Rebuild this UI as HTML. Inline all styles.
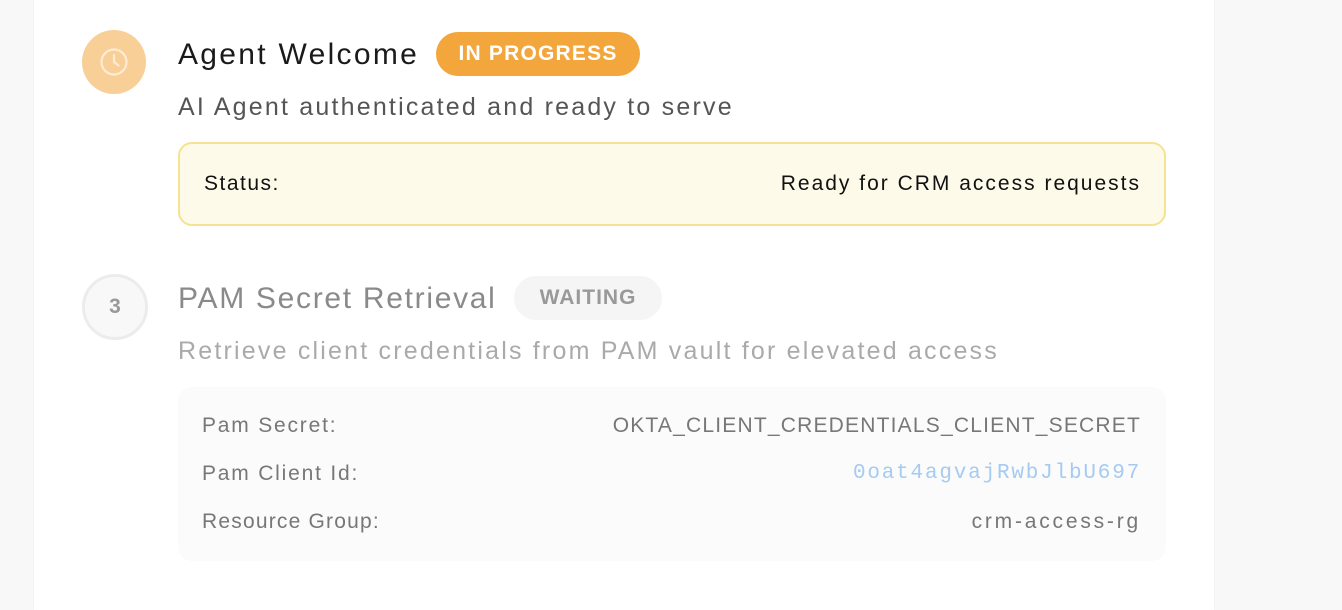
<!DOCTYPE html>
<html><head><style>
body{margin:0;width:1342px;height:592px;background:#f8f8f8;font-family:"Liberation Sans",sans-serif;position:relative;overflow:hidden}
.card{position:absolute;left:34px;top:-10px;width:1180px;height:620px;background:#fff;box-shadow:0 0 2px rgba(0,0,0,.06)}
.a{position:absolute;white-space:nowrap}
</style></head><body>
<div class="card"></div>
<div class="a" style="left:82px;top:30px;width:64px;height:64px;border-radius:50%;background:#f8cf96"></div>
<svg class="a" style="left:94px;top:42px" width="40" height="40" viewBox="0 0 40 40"><circle cx="20" cy="20" r="12.5" fill="none" stroke="#fdebd3" stroke-width="2.2"/><path d="M20 13v7l4.5 3.5" fill="none" stroke="#fdebd3" stroke-width="2.2" stroke-linecap="round"/></svg>
<div class="a" style="left:178px;top:38px;font-size:30px;color:#1a1a1a;letter-spacing:2.3px">Agent Welcome</div>
<div class="a" style="left:436px;top:32px;width:204px;height:44px;border-radius:22px;background:#f2a63c;color:#fff;font-size:21px;font-weight:bold;line-height:44px;text-align:center;letter-spacing:1.2px">IN PROGRESS</div>
<div class="a" style="left:178px;top:93px;font-size:25px;color:#555;letter-spacing:2.2px">AI Agent authenticated and ready to serve</div>
<div class="a" style="left:178px;top:142px;width:984px;height:80px;border:2px solid #f6e291;border-radius:14px;background:#fefaea"></div>
<div class="a" style="left:204px;top:172px;font-size:21px;color:#111;letter-spacing:1.5px">Status:</div>
<div class="a" style="right:201px;top:172px;font-size:21px;color:#111;letter-spacing:2px">Ready for CRM access requests</div>

<div class="a" style="left:82px;top:274px;width:60px;height:60px;border-radius:50%;border:3px solid #ececec;background:#f8f8f8;color:#999;font-size:21px;font-weight:bold;text-align:center;line-height:60px">3</div>
<div class="a" style="left:178px;top:282px;font-size:30px;color:#8a8a8a;letter-spacing:1.7px">PAM Secret Retrieval</div>
<div class="a" style="left:514px;top:276px;width:148px;height:44px;border-radius:22px;background:#f5f5f5;color:#999;font-size:21px;font-weight:bold;line-height:44px;text-align:center;letter-spacing:1px">WAITING</div>
<div class="a" style="left:178px;top:337px;font-size:25px;color:#aaa;letter-spacing:2.2px">Retrieve client credentials from PAM vault for elevated access</div>
<div class="a" style="left:178px;top:387px;width:988px;height:174px;border-radius:14px;background:#fbfbfb"></div>
<div class="a" style="left:202px;top:414px;font-size:21px;color:#777;letter-spacing:1.8px">Pam Secret:</div>
<div class="a" style="right:201px;top:414px;font-size:21px;color:#777;letter-spacing:1.2px">OKTA_CLIENT_CREDENTIALS_CLIENT_SECRET</div>
<div class="a" style="left:202px;top:462px;font-size:21px;color:#777;letter-spacing:1.8px">Pam Client Id:</div>
<div class="a" style="right:201px;top:462px;font-size:21px;color:#a5cbf2;font-family:'Liberation Mono',monospace;letter-spacing:1.8px">0oat4agvajRwbJlbU697</div>
<div class="a" style="left:202px;top:510px;font-size:21px;color:#777;letter-spacing:1.2px">Resource Group:</div>
<div class="a" style="right:201px;top:510px;font-size:21px;color:#777;letter-spacing:2.8px">crm-access-rg</div>
</body></html>
